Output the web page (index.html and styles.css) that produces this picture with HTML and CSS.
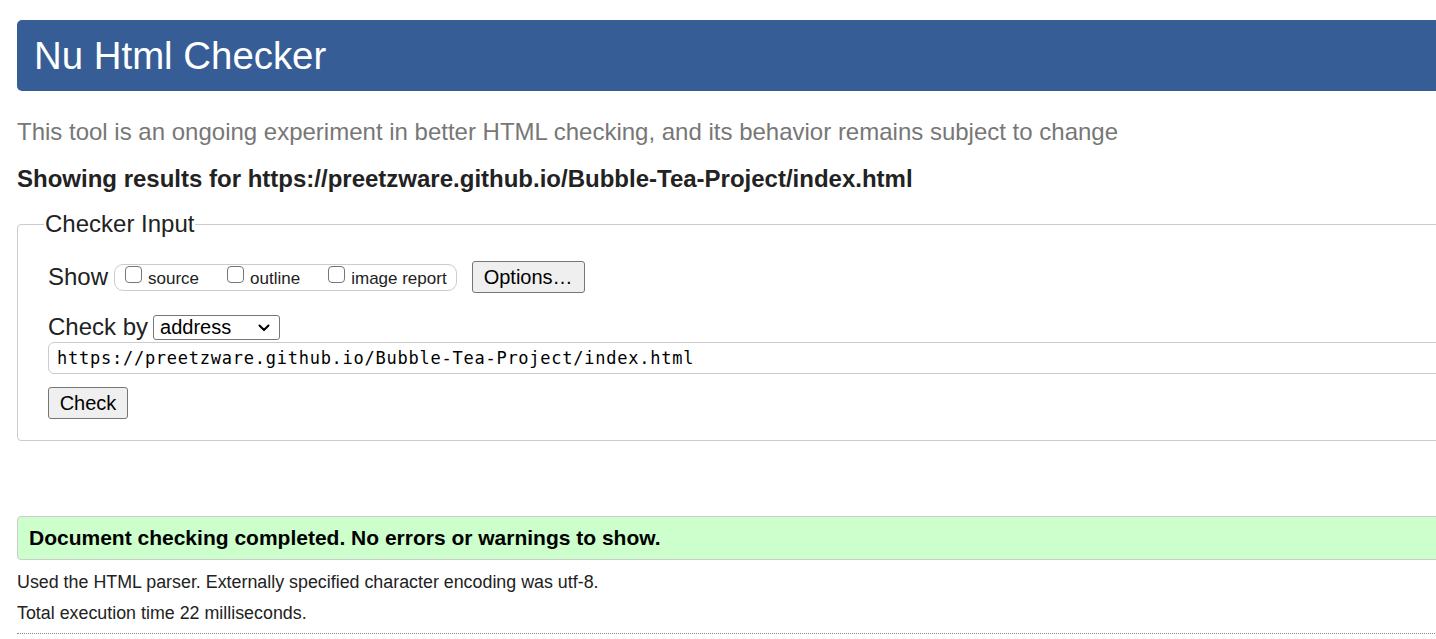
FILE: index.html
```html
<!DOCTYPE html>
<html lang="en">
<head>
<meta charset="utf-8">
<title>Nu Html Checker</title>
<link rel="stylesheet" href="styles.css">
</head>
<body>
<div class="page">
  <h1 class="banner">Nu Html Checker</h1>
  <p class="intro">This tool is an ongoing experiment in better HTML checking, and its behavior remains subject to change</p>
  <p class="results-for">Showing results for https://preetzware.github.io/Bubble-Tea-Project/index.html</p>
  <form class="checker">
    <fieldset class="checker-input">
      <legend class="legend">Checker Input</legend>
      <div class="show-row">
        <span class="label-big">Show</span>
        <span class="show-group">
          <label class="opt"><input type="checkbox" class="cb">source</label>
          <label class="opt"><input type="checkbox" class="cb">outline</label>
          <label class="opt"><input type="checkbox" class="cb">image report</label>
        </span>
        <button type="button" class="btn btn-options">Options…</button>
      </div>
      <div class="checkby-row">
        <span class="label-big">Check by</span>
        <span class="select-wrap">
          <select class="select"><option>address</option></select>
          <svg class="chevron" width="12" height="8" viewBox="0 0 12 8" aria-hidden="true"><path d="M1.5 1.5 L6 6 L10.5 1.5" fill="none" stroke="#000" stroke-width="2" stroke-linecap="round" stroke-linejoin="round"/></svg>
        </span>
      </div>
      <div class="url-box">https://preetzware.github.io/Bubble-Tea-Project/index.html</div>
      <div class="check-row"><button type="button" class="btn btn-check">Check</button></div>
    </fieldset>
  </form>
  <div class="success">Document checking completed. No errors or warnings to show.</div>
  <p class="details first">Used the HTML parser. Externally specified character encoding was utf-8.</p>
  <p class="details">Total execution time 22 milliseconds.</p>
  <hr class="rule">
</div>
</body>
</html>
```
FILE: styles.css
```css
html, body {
  margin: 0;
  padding: 0;
  overflow: hidden;
  background: #fff;
}
body {
  font-family: "Liberation Sans", Arial, sans-serif;
  color: #222;
}
.page {
  width: 1500px;
  padding: 20px 0 0 17px;
}
.banner {
  margin: 0;
  height: 71px;
  box-sizing: border-box;
  padding: 0 0 0 17px;
  background: #365d95;
  color: #fff;
  font-weight: normal;
  font-size: 38.4px;
  line-height: 71px;
  border-radius: 5px;
}
.intro {
  margin: 27px 0 0 0;
  font-size: 24px;
  line-height: 28px;
  color: #777;
}
.results-for {
  margin: 19px 0 0 0;
  font-size: 24px;
  line-height: 28px;
  font-weight: bold;
  color: #222;
}
.checker {
  margin: 17px 0 0 0;
}
.checker-input {
  margin: 0;
  border: 1px solid #ccc;
  border-radius: 4px;
  padding: 23px 0 21px 30px;
}
.legend {
  font-size: 24px;
  line-height: 28px;
  padding: 0 1px;
  margin-left: -4px;
  color: #222;
}
.show-row {
  display: flex;
  align-items: center;
  height: 32px;
}
.label-big {
  font-size: 24px;
  color: #222;
}
.show-group {
  display: inline-flex;
  align-items: center;
  margin-left: 6px;
  height: 27px;
  box-sizing: border-box;
  border: 1px solid #ccc;
  border-radius: 9px;
  padding: 0 9px 0 10px;
}
.opt {
  display: inline-flex;
  align-items: center;
  font-size: 17px;
  color: #222;
  margin-right: 28px;
  padding-top: 3px;
}
.opt:last-child {
  margin-right: 0;
}
.cb {
  appearance: none;
  -webkit-appearance: none;
  box-sizing: border-box;
  margin: -9px 6px 0 0;
  width: 17px;
  height: 17px;
  border: 1px solid #767676;
  border-radius: 4px;
  background: #fff;
}
.btn {
  font-family: "Liberation Sans", Arial, sans-serif;
  font-size: 20px;
  color: #000;
  background: #efefef;
  border: 1px solid #767676;
  border-radius: 3px;
  padding: 0;
}
.btn-options {
  margin-left: 15px;
  height: 32px;
  width: 113px;
}
.checkby-row {
  display: flex;
  align-items: center;
  margin-top: 21px;
  height: 26px;
}
.select-wrap {
  position: relative;
  display: inline-flex;
  margin-left: 5px;
}
.select {
  appearance: none;
  -webkit-appearance: none;
  width: 127px;
  height: 25px;
  box-sizing: border-box;
  font-family: "Liberation Sans", Arial, sans-serif;
  font-size: 20px;
  line-height: 23px;
  color: #000;
  border: 1px solid #767676;
  border-radius: 3px;
  background: #fff;
  padding: 0 0 0 6px;
}
.chevron {
  position: absolute;
  right: 10px;
  top: 9px;
  pointer-events: none;
}
.url-box {
  margin-top: 2px;
  height: 32px;
  box-sizing: border-box;
  border: 1px solid #ccc;
  border-radius: 6px;
  padding: 0 0 0 8px;
  font-family: "DejaVu Sans Mono", monospace;
  font-size: 17px;
  line-height: 30px;
  letter-spacing: 0.75px;
  color: #000;
}
.check-row {
  margin-top: 13px;
  height: 32px;
}
.btn-check {
  height: 32px;
  width: 80px;
}
.success {
  margin-top: 75px;
  height: 44px;
  box-sizing: border-box;
  background: #ccffcc;
  border: 1px solid #ccc;
  border-radius: 4px;
  padding: 0 0 0 11px;
  font-size: 21px;
  font-weight: bold;
  line-height: 42px;
  color: #000;
}
.details {
  margin: 9px 0 0 0;
  font-size: 17.85px;
  line-height: 22px;
  color: #222;
}
.details.first {
  margin-top: 11px;
}
.rule {
  margin: 9px 0 0 0;
  border: 0;
  border-top: 1px dotted #888;
  height: 0;
}
```
